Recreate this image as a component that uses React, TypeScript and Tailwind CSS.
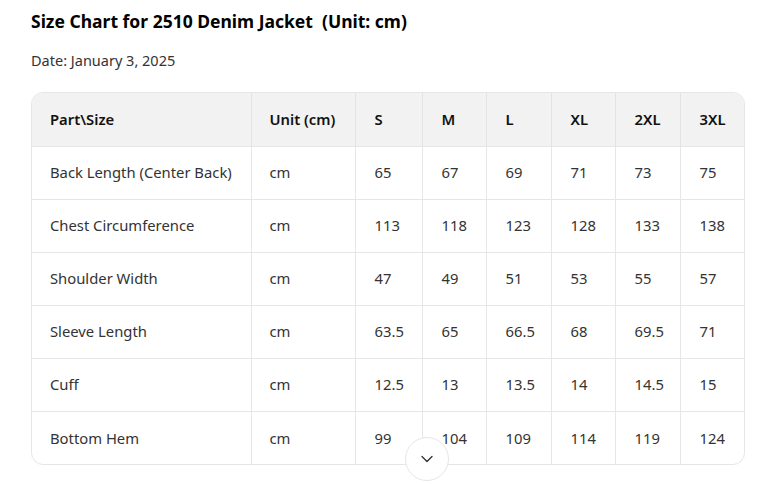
import React from 'react';
import { ChevronDown } from 'lucide-react';

const sizes = ['S', 'M', 'L', 'XL', '2XL', '3XL'];

const rows: { part: string; values: string[] }[] = [
  { part: 'Back Length (Center Back)', values: ['65', '67', '69', '71', '73', '75'] },
  { part: 'Chest Circumference', values: ['113', '118', '123', '128', '133', '138'] },
  { part: 'Shoulder Width', values: ['47', '49', '51', '53', '55', '57'] },
  { part: 'Sleeve Length', values: ['63.5', '65', '66.5', '68', '69.5', '71'] },
  { part: 'Cuff', values: ['12.5', '13', '13.5', '14', '14.5', '15'] },
  { part: 'Bottom Hem', values: ['99', '104', '109', '114', '119', '124'] },
];

// column widths taken from the chart
const colWidths = [219, 104, 67, 64, 65, 64, 65, 64];

const App: React.FC = () => {
  return (
    <div
      className="w-[775px] h-[484px] bg-white text-[#222] overflow-hidden"
      style={{ fontFamily: '"Noto Sans", "Open Sans", sans-serif' }}
    >
      <div className="pl-[31px] pr-[30px] pt-[9px]">
        <h1 className="text-[17.5px] font-bold leading-[24px] text-black">
          Size Chart for 2510 Denim Jacket&nbsp;&nbsp;(Unit: cm)
        </h1>
        <p className="mt-[17px] text-[14.5px] leading-[20px] text-[#333]">Date: January 3, 2025</p>

        <div className="relative mt-[22px] w-[714px]">
          <div className="rounded-xl border border-[#e6e6e6] overflow-hidden">
            <table className="w-full table-fixed border-collapse text-[14.8px]">
              <colgroup>
                {colWidths.map((w, i) => (
                  <col key={i} style={{ width: w }} />
                ))}
              </colgroup>
              <thead>
                <tr className="h-[53px] bg-[#f2f2f2]">
                  <th className="px-[18px] text-left font-semibold text-[#111]">Part\Size</th>
                  <th className="px-[18px] text-left font-semibold text-[#111] border-l border-[#e3e3e3]">Unit (cm)</th>
                  {sizes.map((s) => (
                    <th key={s} className="pl-[19px] pr-[17px] text-left font-semibold text-[#111] border-l border-[#e3e3e3]">
                      {s}
                    </th>
                  ))}
                </tr>
              </thead>
              <tbody>
                {rows.map((r) => (
                  <tr key={r.part} className="h-[53px] border-t border-[#e6e6e6]">
                    <td className="px-[18px] text-[#333] whitespace-nowrap">{r.part}</td>
                    <td className="px-[18px] text-[#333] border-l border-[#e6e6e6]">cm</td>
                    {r.values.map((v, i) => (
                      <td key={i} className="pl-[19px] pr-[17px] text-[#333] border-l border-[#e6e6e6]">
                        {v}
                      </td>
                    ))}
                  </tr>
                ))}
              </tbody>
            </table>
          </div>

          <button className="absolute left-[374px] top-[345px] w-[44px] h-[44px] rounded-full bg-white border border-[#e6e6e6] flex items-center justify-center text-[#333]">
            <ChevronDown size={20} strokeWidth={1.6} />
          </button>
        </div>
      </div>
    </div>
  );
};

export default App;
